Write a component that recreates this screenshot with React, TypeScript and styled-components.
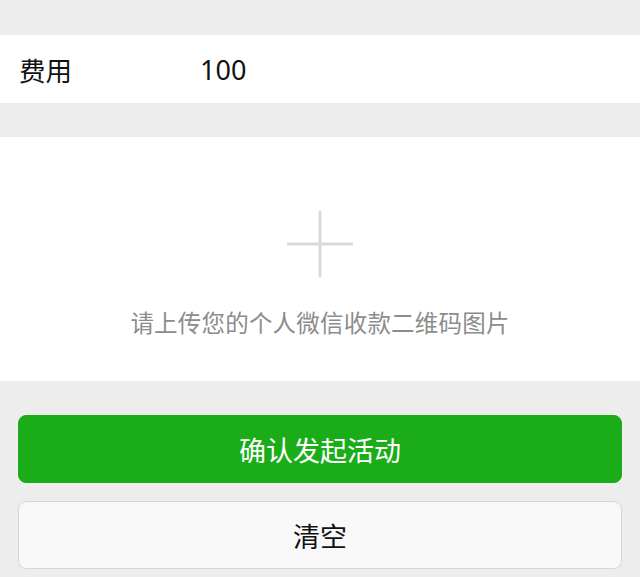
import React from "react";
import styled, { createGlobalStyle } from "styled-components";

const GlobalStyle = createGlobalStyle`
  html, body {
    margin: 0;
    padding: 0;
    background: #ededed;
    font-family: "Noto Sans CJK SC", "Noto Sans", sans-serif;
  }
`;

const Page = styled.div`
  width: 640px;
  height: 577px;
  background: #ededed;
  padding-top: 35px;
  box-sizing: border-box;
  overflow: hidden;
`;

const Cell = styled.div`
  display: flex;
  align-items: center;
  height: 68px;
  padding: 0 19px;
  background: #fff;
  font-size: 26.5px;
  color: #111;
`;

const CellLabel = styled.div`
  width: 181px;
`;

const CellValue = styled.div`
  font-family: "Noto Sans", sans-serif;
  font-size: 27px;
`;

const Uploader = styled.div`
  margin-top: 34px;
  height: 244px;
  background: #fff;
  display: flex;
  flex-direction: column;
  align-items: center;
  box-sizing: border-box;
  padding-top: 72px;
`;

const Hint = styled.div`
  margin-top: 26px;
  font-size: 23.5px;
  color: #8c8c8c;
  letter-spacing: 0.2px;
`;

const Actions = styled.div`
  display: flex;
  flex-direction: column;
  gap: 18px;
  padding: 34px 18px 0;
`;

const Button = styled.button<{ $primary?: boolean }>`
  height: 68px;
  border-radius: 8px;
  font-family: inherit;
  font-size: 27px;
  cursor: pointer;
  background: ${(p) => (p.$primary ? "#1aad19" : "#f8f8f8")};
  color: ${(p) => (p.$primary ? "#fff" : "#111")};
  border: 1px solid ${(p) => (p.$primary ? "#1aad19" : "#d6d6d6")};
`;

const PlusIcon = () => (
  <svg width="70" height="70" viewBox="0 0 70 70">
    <path d="M35 2 V68 M2 35 H68" stroke="#d9d9d9" strokeWidth="3" fill="none" />
  </svg>
);

export default function App() {
  return (
    <Page>
      <GlobalStyle />
      <Cell>
        <CellLabel>费用</CellLabel>
        <CellValue>100</CellValue>
      </Cell>
      <Uploader>
        <PlusIcon />
        <Hint>请上传您的个人微信收款二维码图片</Hint>
      </Uploader>
      <Actions>
        <Button $primary>确认发起活动</Button>
        <Button>清空</Button>
      </Actions>
    </Page>
  );
}
